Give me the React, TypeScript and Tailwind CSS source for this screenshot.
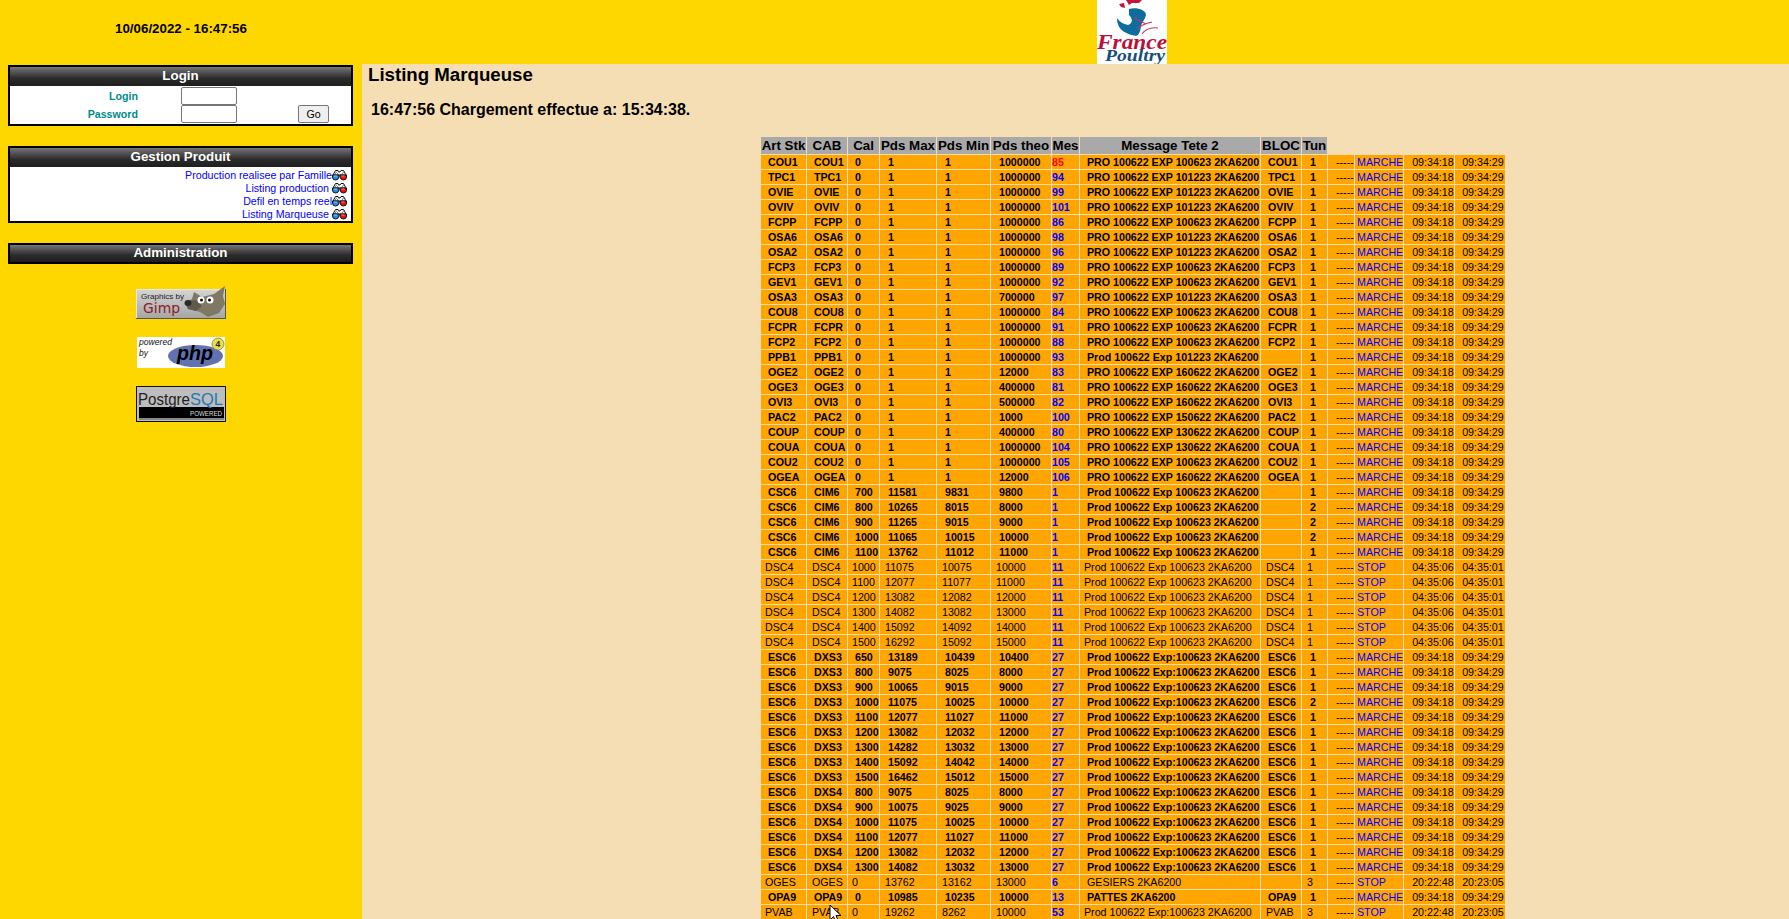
const FONT = "font-['Liberation_Sans',Arial,sans-serif]";

type Row = {
  art: string;
  cab: string;
  cal: string;
  max: string;
  min: string;
  theo: string;
  mes: string;
  msg: string;
  bloc: string;
  tun: string;
  status: string;
  t1: string;
  t2: string;
  bold: boolean;
  hot?: boolean;
  msgIndent?: boolean;
};

const marche = (
  art: string,
  cab: string,
  cal: string,
  max: string,
  min: string,
  theo: string,
  mes: string,
  msg: string,
  bloc: string,
  tun = '1',
): Row => ({ art, cab, cal, max, min, theo, mes, msg, bloc, tun, status: 'MARCHE', t1: '09:34:18', t2: '09:34:29', bold: true });

const pro = (code: string, theo: string, mes: string, exp: string) =>
  marche(code, code, '0', '1', '1', theo, mes, `PRO 100622 EXP ${exp} 2KA6200`, code);

const csc = (cal: string, max: string, min: string, theo: string, tun: string) =>
  marche('CSC6', 'CIM6', cal, max, min, theo, '1', 'Prod 100622 Exp 100623 2KA6200', '', tun);

const dsc = (cal: string, max: string, min: string, theo: string): Row => ({
  art: 'DSC4',
  cab: 'DSC4',
  cal,
  max,
  min,
  theo,
  mes: '11',
  msg: 'Prod 100622 Exp 100623 2KA6200',
  bloc: 'DSC4',
  tun: '1',
  status: 'STOP',
  t1: '04:35:06',
  t2: '04:35:01',
  bold: false,
});

const esc = (cab: string, cal: string, max: string, min: string, theo: string, tun = '1') =>
  marche('ESC6', cab, cal, max, min, theo, '27', 'Prod 100622 Exp:100623 2KA6200', 'ESC6', tun);

const rows: Row[] = [
  { ...pro('COU1', '1000000', '85', '100623'), hot: true },
  pro('TPC1', '1000000', '94', '101223'),
  pro('OVIE', '1000000', '99', '101223'),
  pro('OVIV', '1000000', '101', '101223'),
  pro('FCPP', '1000000', '86', '100623'),
  pro('OSA6', '1000000', '98', '101223'),
  pro('OSA2', '1000000', '96', '101223'),
  pro('FCP3', '1000000', '89', '100623'),
  pro('GEV1', '1000000', '92', '100623'),
  pro('OSA3', '700000', '97', '101223'),
  pro('COU8', '1000000', '84', '100623'),
  pro('FCPR', '1000000', '91', '100623'),
  pro('FCP2', '1000000', '88', '100623'),
  marche('PPB1', 'PPB1', '0', '1', '1', '1000000', '93', 'Prod 100622 Exp 101223 2KA6200', ''),
  pro('OGE2', '12000', '83', '160622'),
  pro('OGE3', '400000', '81', '160622'),
  pro('OVI3', '500000', '82', '160622'),
  pro('PAC2', '1000', '100', '150622'),
  pro('COUP', '400000', '80', '130622'),
  pro('COUA', '1000000', '104', '130622'),
  pro('COU2', '1000000', '105', '100623'),
  pro('OGEA', '12000', '106', '160622'),
  csc('700', '11581', '9831', '9800', '1'),
  csc('800', '10265', '8015', '8000', '2'),
  csc('900', '11265', '9015', '9000', '2'),
  csc('1000', '11065', '10015', '10000', '2'),
  csc('1100', '13762', '11012', '11000', '1'),
  dsc('1000', '11075', '10075', '10000'),
  dsc('1100', '12077', '11077', '11000'),
  dsc('1200', '13082', '12082', '12000'),
  dsc('1300', '14082', '13082', '13000'),
  dsc('1400', '15092', '14092', '14000'),
  dsc('1500', '16292', '15092', '15000'),
  esc('DXS3', '650', '13189', '10439', '10400'),
  esc('DXS3', '800', '9075', '8025', '8000'),
  esc('DXS3', '900', '10065', '9015', '9000'),
  esc('DXS3', '1000', '11075', '10025', '10000', '2'),
  esc('DXS3', '1100', '12077', '11027', '11000'),
  esc('DXS3', '1200', '13082', '12032', '12000'),
  esc('DXS3', '1300', '14282', '13032', '13000'),
  esc('DXS3', '1400', '15092', '14042', '14000'),
  esc('DXS3', '1500', '16462', '15012', '15000'),
  esc('DXS4', '800', '9075', '8025', '8000'),
  esc('DXS4', '900', '10075', '9025', '9000'),
  esc('DXS4', '1000', '11075', '10025', '10000'),
  esc('DXS4', '1100', '12077', '11027', '11000'),
  esc('DXS4', '1200', '13082', '12032', '12000'),
  esc('DXS4', '1300', '14082', '13032', '13000'),
  {
    art: 'OGES', cab: 'OGES', cal: '0', max: '13762', min: '13162', theo: '13000', mes: '6',
    msg: 'GESIERS 2KA6200', bloc: '', tun: '3', status: 'STOP', t1: '20:22:48', t2: '20:23:05',
    bold: false, msgIndent: true,
  },
  marche('OPA9', 'OPA9', '0', '10985', '10235', '10000', '13', 'PATTES 2KA6200', 'OPA9'),
  {
    art: 'PVAB', cab: 'PVAB', cal: '0', max: '19262', min: '8262', theo: '10000', mes: '53',
    msg: 'Prod 100622 Exp:100623 2KA6200', bloc: 'PVAB', tun: '3', status: 'STOP', t1: '20:22:48', t2: '20:23:05',
    bold: false,
  },
];

const columnWidths = [
  'w-[45px]', 'w-[40px]', 'w-[31px]', 'w-[56px]', 'w-[53px]', 'w-[60px]', 'w-[27px]',
  'w-[180px]', 'w-[40px]', 'w-[25px]', 'w-[26px]', 'w-[48px]', 'w-[50px]', 'w-[50px]',
];

const headers = ['Art Stk', 'CAB', 'Cal', 'Pds Max', 'Pds Min', 'Pds theo', 'Mes', 'Message Tete 2', 'BLOC', 'Tun'];

const Glasses = () => (
  <svg width="15" height="12" viewBox="0 0 15 12" className="shrink-0">
    <path d="M1 6 L3.500 1.500 H6 L7 3 H8 L9 1.500 H11.500 L14 6 Z" fill="#fff" stroke="#111" strokeWidth="1" />
    <path d="M3 5 L5 2.500 M5 5 L6.500 3.500 M10 5 L12 2.500" stroke="#555" strokeWidth="0.800" />
    <path d="M0.500 6 H7 V8 Q6.500 11 3.500 11 Q0.500 11 0.500 8 Z" fill="#1f8fe8" stroke="#111" strokeWidth="1" />
    <path d="M8 6 H14.500 V8 Q14.500 11 11.500 11 Q8.500 11 8 8 Z" fill="#f01010" stroke="#111" strokeWidth="1" />
    <path d="M2 7 H5 M9.500 7 H12.500" stroke="#fff" strokeWidth="0.800" opacity="0.700" />
  </svg>
);

const Panel = ({ title, slim, children }: { title: string; slim?: boolean; children?: React.ReactNode }) => (
  <div className="border-2 border-black bg-white">
    <div
      className={
        slim
          ? 'h-[17px] bg-linear-to-b from-[#777777] via-[#2b2b2b] via-60% to-[#1e1e1e] text-center text-[13.33px] leading-[15px] font-bold text-white'
          : 'h-[19px] bg-linear-to-b from-[#777777] via-[#2b2b2b] via-60% to-[#1e1e1e] text-center text-[13.33px] leading-[18px] font-bold text-white'
      }
    >
      {title}
    </div>
    {children}
  </div>
);

const ProductLink = ({ label, gap }: { label: string; gap?: boolean }) => (
  <div className="flex h-[13px] items-center justify-end pr-[4px]">
    <a href="#" className={gap ? 'mr-[3px] text-[#0000ff]' : 'text-[#0000ff]'}>
      {label}
    </a>
    <Glasses />
  </div>
);

const GimpBadge = () => (
  <svg width="90" height="33" viewBox="0 0 90 33">
    <defs>
      <linearGradient id="gimpBg" x1="0" y1="0" x2="0" y2="1">
        <stop offset="0" stopColor="#d4d4d4" />
        <stop offset="1" stopColor="#a6a6a6" />
      </linearGradient>
    </defs>
    <rect x="0" y="3" width="90" height="30" fill="#555" />
    <rect x="0" y="3" width="89" height="29" fill="#e6e6e6" />
    <rect x="1" y="4" width="88" height="28" fill="url(#gimpBg)" />
    <text x="5" y="13" fontSize="7.500" fill="#222" fontFamily="Liberation Sans" textLength="43" lengthAdjust="spacingAndGlyphs">Graphics by</text>
    <text x="7" y="27" fontSize="14" fill="#8c1c24" fontFamily="DejaVu Sans" textLength="37" lengthAdjust="spacingAndGlyphs">Gimp</text>
    <path d="M58 6 L66 11 L78 8 L89 0 L87 10 L89 18 L83 27 L72 31 L64 26 L52 23 L49 16 L56 13 Z" fill="#7f7862" />
    <path d="M49 16 L60 14 L66 20 L60 25 L52 23 Z" fill="#5f5a4a" />
    <ellipse cx="52" cy="17" rx="3.500" ry="3" fill="#2b2b2b" />
    <circle cx="65" cy="14" r="3.500" fill="#fff" />
    <circle cx="74" cy="14" r="3.500" fill="#fff" />
    <circle cx="65.500" cy="14" r="1.500" fill="#000" />
    <circle cx="73.500" cy="14" r="1.500" fill="#000" />
  </svg>
);

const PhpBadge = () => (
  <svg width="88" height="31" viewBox="0 0 88 31">
    <rect width="88" height="31" fill="#fff" />
    <text x="2" y="8" fontSize="8.500" fontStyle="italic" fill="#111" fontFamily="Liberation Sans" textLength="33" lengthAdjust="spacingAndGlyphs">powered</text>
    <text x="2" y="19" fontSize="8.500" fontStyle="italic" fill="#111" fontFamily="Liberation Sans">by</text>
    <ellipse cx="58.500" cy="19" rx="27.500" ry="11" fill="#6272b0" />
    <text x="40" y="23" fontSize="20" fontWeight="700" fontStyle="italic" fill="#000" fontFamily="Liberation Sans" textLength="36" lengthAdjust="spacingAndGlyphs">php</text>
    <circle cx="81" cy="7" r="6" fill="#e8e23c" stroke="#777" strokeWidth="0.800" />
    <text x="78.500" y="10" fontSize="8.500" fontWeight="700" fill="#222" fontFamily="Liberation Sans">4</text>
  </svg>
);

const PostgresBadge = () => (
  <svg width="90" height="36" viewBox="0 0 90 36">
    <rect width="90" height="36" fill="#111" />
    <rect x="1" y="1" width="88" height="34" fill="#bdbdbd" />
    <rect x="3" y="21" width="85" height="11" fill="#000" />
    <rect x="3" y="32" width="85" height="2" fill="#888" />
    <text x="2" y="19" fontSize="17" fill="#222" fontFamily="Liberation Sans" textLength="52" lengthAdjust="spacingAndGlyphs">Postgre</text>
    <text x="54" y="19" fontSize="17" fill="#1f78b4" fontFamily="Liberation Sans" textLength="33" lengthAdjust="spacingAndGlyphs">SQL</text>
    <text x="54" y="30" fontSize="8" fill="#ddd" fontFamily="Liberation Sans" textLength="32" lengthAdjust="spacingAndGlyphs">POWERED</text>
  </svg>
);

const FranceLogo = () => (
  <svg width="70" height="64" viewBox="0 0 70 64" className="bg-white">
    <path d="M29 0 H45 L42 3 H35 L32 5 Z" fill="#c2163f" />
    <path d="M22 4 L27 3 L28 8 L24 7 Z" fill="#c2163f" />
    <path d="M32 9 C38 7 49 9 49 15 C48 20 44 23 44 27 C43 32 42 35 39 36 C30 34 20 31 20 18 C23 22 26 24 31 25 C36 23 36 19 32 15 Z" fill="#0f6c9e" />
    <path d="M41 29 C44 25 50 23 55 22 M45 34 C49 28 54 27 61 28 M37 18 L49 24" fill="none" stroke="#c9395e" strokeWidth="1.200" />
    <text x="0" y="49" fontSize="20" fontWeight="700" fontStyle="italic" fill="#b8123c" fontFamily="Liberation Serif" textLength="70" lengthAdjust="spacingAndGlyphs">France</text>
    <text x="8" y="61" fontSize="16" fontWeight="700" fontStyle="italic" fill="#124f7a" fontFamily="Liberation Serif" textLength="60" lengthAdjust="spacingAndGlyphs">Poultry</text>
  </svg>
);

const ListingTable = () => (
  <table className="table-fixed border-separate border-spacing-[1px] text-[10.67px] leading-[14px] text-black">
    <colgroup>
      {columnWidths.map((width, i) => (
        <col key={i} className={width} />
      ))}
    </colgroup>
    <thead>
      <tr>
        {headers.map((header) => (
          <th key={header} className="h-[17px] whitespace-nowrap bg-[#a9a9a9] p-0 text-center text-[13.33px] leading-[17px] font-bold">
            {header}
          </th>
        ))}
      </tr>
    </thead>
    <tbody>
      {rows.map((row, i) => (
        <tr key={i} className={row.bold ? 'h-[14px] font-bold' : 'h-[14px]'}>
          <td className={row.bold ? 'whitespace-nowrap bg-[#ffa500] p-0 pl-[7px]' : 'whitespace-nowrap bg-[#ffa500] p-0 pl-[4px]'}>{row.art}</td>
          <td className={row.bold ? 'whitespace-nowrap bg-[#ffa500] p-0 pl-[7px]' : 'whitespace-nowrap bg-[#ffa500] p-0 pl-[5px]'}>{row.cab}</td>
          <td className={row.bold ? 'whitespace-nowrap bg-[#ffa500] p-0 pl-[7px]' : 'whitespace-nowrap bg-[#ffa500] p-0 pl-[4px]'}>{row.cal}</td>
          <td className={row.bold ? 'whitespace-nowrap bg-[#ffa500] p-0 pl-[8px]' : 'whitespace-nowrap bg-[#ffa500] p-0 pl-[5px]'}>{row.max}</td>
          <td className={row.bold ? 'whitespace-nowrap bg-[#ffa500] p-0 pl-[8px]' : 'whitespace-nowrap bg-[#ffa500] p-0 pl-[5px]'}>{row.min}</td>
          <td className={row.bold ? 'whitespace-nowrap bg-[#ffa500] p-0 pl-[8px]' : 'whitespace-nowrap bg-[#ffa500] p-0 pl-[5px]'}>{row.theo}</td>
          <td className={row.hot ? 'bg-[#ffa500] p-0 font-bold text-[#ff0000]' : 'bg-[#ffa500] p-0 font-bold text-[#0000ff]'}>{row.mes}</td>
          <td className={row.bold || row.msgIndent ? 'whitespace-nowrap bg-[#ffa500] p-0 pl-[7px]' : 'whitespace-nowrap bg-[#ffa500] p-0 pl-[4px]'}>{row.msg}</td>
          <td className={row.bold ? 'whitespace-nowrap bg-[#ffa500] p-0 pl-[7px]' : 'whitespace-nowrap bg-[#ffa500] p-0 pl-[5px]'}>{row.bloc}</td>
          <td className={row.bold ? 'bg-[#ffa500] p-0 pl-[8px]' : 'bg-[#ffa500] p-0 pl-[5px]'}>{row.tun}</td>
          <td className="bg-[#ffa500] p-0 pl-[8px] font-normal">-----</td>
          <td className="bg-[#ffa500] p-0 pl-[2px] font-normal text-[#0000ff]">{row.status}</td>
          <td className="bg-[#ffa500] p-0 pl-[8px] font-normal">{row.t1}</td>
          <td className="bg-[#ffa500] p-0 pl-[7px] font-normal">{row.t2}</td>
        </tr>
      ))}
    </tbody>
  </table>
);

export default function App() {
  return (
    <div className={`relative flex h-[919px] flex-col overflow-hidden bg-[#ffd700] ${FONT}`}>
      <header className="flex h-[64px] shrink-0">
        <div className="w-[362px] pt-[21px] text-center text-[13.33px] leading-[16px] font-bold text-black">
          10/06/2022 - 16:47:56
        </div>
        <div className="ml-[735px]">
          <FranceLogo />
        </div>
      </header>

      <div className="flex min-h-0 flex-1">
        <aside className="flex w-[362px] shrink-0 flex-col gap-[20px] pt-px pl-[8px]">
          <div className="flex w-[345px] flex-col gap-[20px]">
            <Panel title="Login">
              <div className="grid h-[38px] grid-cols-[128px_43px_56px_61px_31px] grid-rows-[18px_18px] pt-px text-[10.67px] font-bold text-[#008b8b]">
                <div className="col-start-1 row-start-1 self-center text-right">Login</div>
                <input className="col-start-3 row-start-1 h-[18px] w-[56px] rounded-[2px] border border-[#767676] bg-white" />
                <div className="col-start-1 row-start-2 self-center text-right">Password</div>
                <input className="col-start-3 row-start-2 h-[18px] w-[56px] rounded-[2px] border border-[#767676] bg-white" />
                <button className="col-start-5 row-start-2 h-[18px] w-[31px] rounded-[2px] border border-[#767676] bg-[#efefef] text-center text-[10.67px] font-normal text-black">
                  Go
                </button>
              </div>
            </Panel>
            <Panel title="Gestion Produit">
              <div className="flex h-[54px] flex-col pt-px text-[10.67px]">
                <ProductLink label="Production realisee par Famille" />
                <ProductLink label="Listing production" gap />
                <ProductLink label="Defil en temps reel" />
                <ProductLink label="Listing Marqueuse" gap />
              </div>
            </Panel>
            <Panel title="Administration" slim />
          </div>
          <div className="flex w-[345px] flex-col items-center">
            <div className="mt-[2px]">
              <GimpBadge />
            </div>
            <div className="mt-[18px]">
              <PhpBadge />
            </div>
            <div className="mt-[18px]">
              <PostgresBadge />
            </div>
          </div>
        </aside>

        <main className="min-w-0 flex-1 bg-[#f5deb3] text-black">
          <h1 className="pt-px pl-[6px] text-[18.67px] leading-[20px] font-bold">Listing Marqueuse</h1>
          <p className="pt-[15px] pl-[9px] text-[16px] leading-[20px] font-bold">16:47:56 Chargement effectue a: 15:34:38.</p>
          <div className="pt-[16px] pl-[398px]">
            <ListingTable />
          </div>
        </main>
      </div>

      <svg width="14" height="20" viewBox="0 0 14 20" className="absolute top-[904px] left-[829px]">
        <path d="M1 1 V16 L4.500 12.500 L7 18.500 L9.500 17.500 L7 11.500 H12 Z" fill="#fff" stroke="#000" strokeWidth="1" />
      </svg>
    </div>
  );
}
